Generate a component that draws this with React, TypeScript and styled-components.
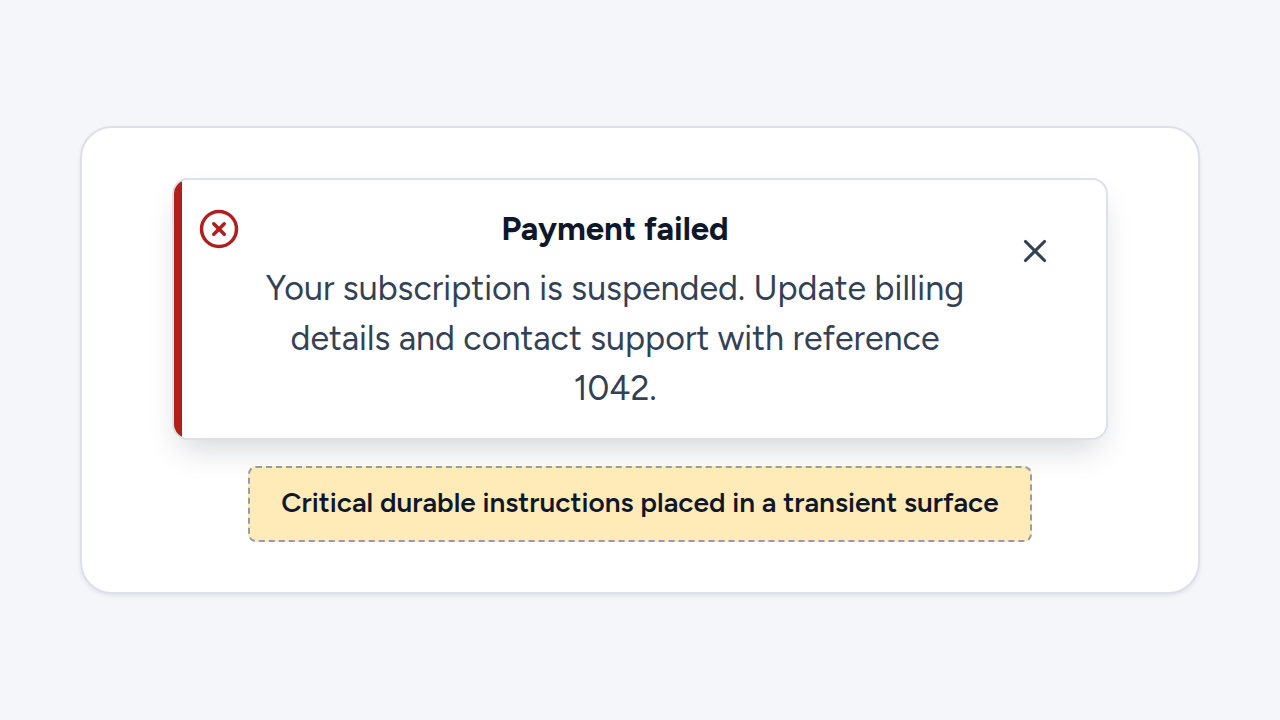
import React from "react";
import styled, { createGlobalStyle } from "styled-components";
import { CircleX, X } from "lucide-react";

const GlobalStyle = createGlobalStyle`
  *, *::before, *::after { box-sizing: border-box; }
  body {
    margin: 0;
    background: #f4f6fa;
    color: #0f172a;
    font-family: Figtree, Lato, "Open Sans", sans-serif;
  }
`;

const Page = styled.main`
  min-height: 100vh;
  display: grid;
  align-items: center;
  padding: 40px 80px;
`;

const Panel = styled.section`
  display: flex;
  flex-direction: column;
  align-items: center;
  gap: 26px;
  padding: 50px 24px;
  background: #ffffff;
  border: 2px solid #dce0ea;
  border-radius: 32px;
  box-shadow: 0 2px 4px rgba(15, 23, 42, 0.08);
`;

const Toast = styled.div`
  display: flex;
  align-items: flex-start;
  gap: 22px;
  width: 100%;
  max-width: 936px;
  padding: 24px 24px 24px 16px;
  overflow: hidden;
  background: #ffffff;
  border: 2px solid #dce0ea;
  border-radius: 16px;
  box-shadow: 0 16px 32px -8px rgba(15, 23, 42, 0.18);
`;

const Accent = styled.span`
  align-self: stretch;
  flex: none;
  width: 8px;
  margin: -24px -6px -24px -16px;
  background: #b01e1e;
`;

const StatusIcon = styled.span`
  display: flex;
  align-items: center;
  flex: none;
  height: 50px;
  color: #b01e1e;
`;

const Message = styled.div`
  flex: 1;
  min-width: 0;
  display: flex;
  flex-direction: column;
  gap: 10px;
  padding: 0 0 0 2px;
  text-align: center;
`;

const Title = styled.h1`
  margin: 0;
  font-size: 33px;
  line-height: 50px;
  font-weight: 700;
`;

const Body = styled.p`
  margin: 0;
  font-size: 34px;
  line-height: 50px;
  color: #334155;
`;

const CloseButton = styled.button`
  display: grid;
  place-items: center;
  flex: none;
  width: 94px;
  height: 94px;
  padding: 0;
  border: 0;
  border-radius: 8px;
  background: transparent;
  color: #334155;
  cursor: pointer;
`;

const Note = styled.p`
  margin: 0;
  padding: 14px 31px 18px;
  background: #ffebb7;
  border: 2px dashed #949cae;
  border-radius: 8px;
  font-size: 28px;
  line-height: 40px;
  font-weight: 600;
  text-align: center;
`;

export default function App() {
  return (
    <>
      <GlobalStyle />
      <Page>
        <Panel>
          <Toast role="alert">
            <Accent />
            <StatusIcon>
              <CircleX size={42} aria-hidden="true" />
            </StatusIcon>
            <Message>
              <Title>Payment failed</Title>
              <Body>
                Your subscription is suspended. Update billing details and contact support with reference 1042.
              </Body>
            </Message>
            <CloseButton type="button" aria-label="Dismiss">
              <X size={38} aria-hidden="true" />
            </CloseButton>
          </Toast>
          <Note>Critical durable instructions placed in a transient surface</Note>
        </Panel>
      </Page>
    </>
  );
}
